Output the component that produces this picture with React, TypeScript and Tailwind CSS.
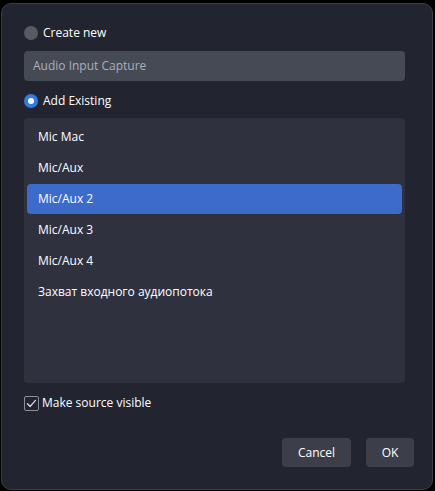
import React from "react";

const items = ["Mic Mac", "Mic/Aux", "Mic/Aux 2", "Mic/Aux 3", "Mic/Aux 4", "Захват входного аудиопотока"];

export default function App() {
  return (
    <div
      className="w-[435px] h-[491px] bg-black pt-[3px] pl-[1px] pr-[2px] pb-[1px] flex"
      style={{ fontFamily: '"Open Sans", "Noto Sans", sans-serif' }}
    >
      <div className="flex-1 flex flex-col rounded-[10px] border border-[#3b3e47] bg-[#22252f] pt-[19px] pl-[21px] pr-[27px] text-[12px] text-white">
        <div className="flex items-center h-[20px] gap-[5px]">
          <div className="w-[14px] h-[14px] ml-[1px] rounded-full bg-[#595b62]" />
          <span className="font-medium">Create new</span>
        </div>
        <div className="mt-[8px] ml-[1px] h-[30px] rounded-[4px] bg-[#454a55] flex items-center px-[9px] text-[#aab0b9]">
          Audio Input Capture
        </div>
        <div className="mt-[10px] flex items-center h-[20px] gap-[5px]">
          <div className="w-[14px] h-[14px] ml-[1px] rounded-full bg-[#2f7de1] flex items-center justify-center">
            <div className="w-[6px] h-[6px] rounded-full bg-white" />
          </div>
          <span className="font-medium">Add Existing</span>
        </div>
        <div className="mt-[7px] ml-[1px] h-[265px] rounded-[4px] bg-[#2f313f] px-[3px] pt-[4px] flex flex-col gap-[1px]">
          {items.map((it) => (
            <div
              key={it}
              className={
                "h-[30px] flex items-center pl-[11px] rounded-[4px] font-medium " +
                (it === "Mic/Aux 2" ? "bg-[#3d6bcc]" : "")
              }
            >
              {it}
            </div>
          ))}
        </div>
        <div className="mt-[10px] flex items-center h-[20px] gap-[3px]">
          <div className="w-[15px] h-[15px] ml-[1px] rounded-[2px] border border-[#8c8f97] flex items-center justify-center">
            <svg width="11" height="11" viewBox="0 0 11 11" fill="none">
              <path d="M1.5 5.8 L4.2 8.4 L9.5 2.4" stroke="#d8d9dc" strokeWidth="1.4" strokeLinecap="round" strokeLinejoin="round" />
            </svg>
          </div>
          <span className="font-medium">Make source visible</span>
        </div>
        <div className="mt-[25px] flex justify-end gap-[15px] mr-[-9px]">
          <button className="w-[69px] h-[29px] rounded-[4px] bg-[#3c3f4a] text-white text-[12px] font-medium">Cancel</button>
          <button className="w-[48px] h-[29px] rounded-[4px] bg-[#3c3f4a] text-white text-[12px] font-medium">OK</button>
        </div>
      </div>
    </div>
  );
}
